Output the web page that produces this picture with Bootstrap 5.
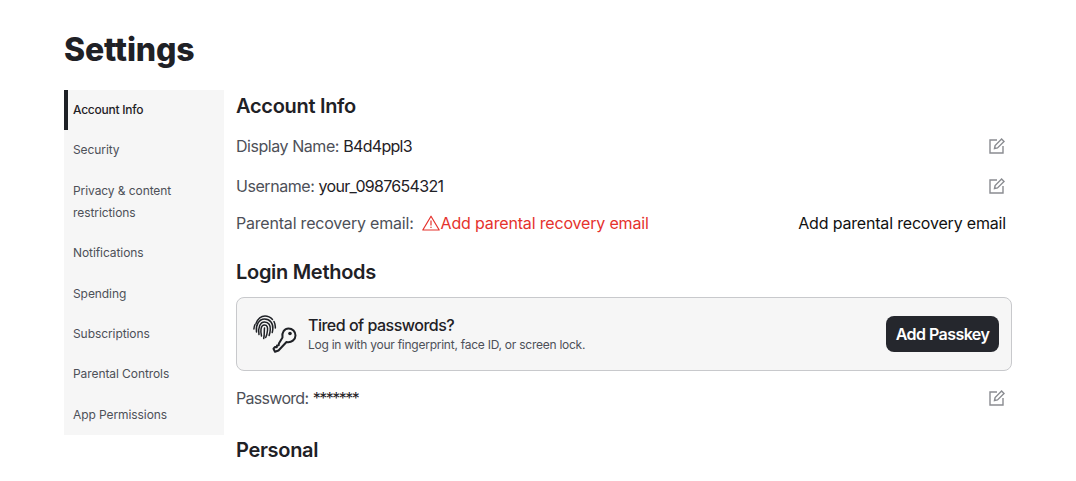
<!DOCTYPE html>
<html lang="en">

<head>
    <meta charset="UTF-8">
    <meta name="viewport" content="width=device-width, initial-scale=1.0">
    <title>Settings</title>
    <link href="https://cdn.jsdelivr.net/npm/bootstrap@5.3.0/dist/css/bootstrap.min.css" rel="stylesheet">
    <style>
        body { font-family: Inter, "Liberation Sans", sans-serif; color: #1f2126; background: #fff; overflow: hidden; }
        .page-wrap { width: 948px; margin-left: 64px; padding-top: 30px; }
        .page-title { font-size: 32px; line-height: 40px; font-weight: 800; margin: 0 0 20px; letter-spacing: -.15px; }
        .side-menu { width: 160px; background: #f6f6f6; flex: none; }
        .side-item { display: block; padding: 9px 8px 9.4px 9px; font-size: 12px; line-height: 22px; color: #4d5058; text-decoration: none; letter-spacing: -.08px; }
        .side-item.current { color: #1f2126; font-weight: 500; letter-spacing: -.25px; box-shadow: inset 4px 0 0 #1f2126; }
        .main-col { flex: 1; min-width: 0; margin-left: 4px; }
        .sect-title { font-size: 20px; line-height: 28px; font-weight: 600; margin: 0; letter-spacing: -.3px; }
        .first-title { margin-top: 2px; }
        .login-title { margin-top: 23px; }
        .personal-title { margin-top: 26px; }
        .info-row { font-size: 16px; line-height: 24px; color: #1f2126; letter-spacing: -.2px; }
        .info-label { color: #4d5058; }
        .short-label { letter-spacing: -.45px; }
        .pass-label { letter-spacing: -.7px; }
        .info-val { letter-spacing: -.7px; }
        .stars { letter-spacing: -1.5px; }
        .row-a { margin-top: 14px; }
        .row-b { margin-top: 16px; }
        .row-c { margin-top: 13px; }
        .row-d { margin-top: 15px; }
        .edit-icon { width: 18px; height: 18px; color: #8a8c91; margin-right: 6px; }
        .warn-text { color: #e5322d; letter-spacing: -.17px; }
        .warn-icon { margin-right: 1px; }
        .add-link { color: #111; margin-right: 6px; letter-spacing: -.18px; }
        .passkey-box { background: #f6f6f6; border: 1px solid #c8c9cc; border-radius: 8px; height: 74px; padding: 0 12px 0 16px; margin-top: 11px; }
        .passkey-title { font-size: 16px; line-height: 20px; font-weight: 500; letter-spacing: -.5px; margin-bottom: 2px; }
        .passkey-sub { font-size: 12px; line-height: 16px; color: #4d5058; letter-spacing: -.25px; }
        .passkey-art { flex: none; margin-right: 11px; }
        .passkey-btn { background: #25272d; color: #fff; font-size: 16px; font-weight: 600; letter-spacing: -.55px; border-radius: 8px; border: 0; height: 36px; width: 113px; padding: 0; }
    </style>
</head>

<body>
    <div class="page-wrap">
        <h1 class="page-title">Settings</h1>
        <div class="d-flex gap-2 align-items-start">
            <nav class="side-menu">
                <a class="side-item current" href="#">Account Info</a>
                <a class="side-item" href="#">Security</a>
                <a class="side-item" href="#">Privacy &amp; content restrictions</a>
                <a class="side-item" href="#">Notifications</a>
                <a class="side-item" href="#">Spending</a>
                <a class="side-item" href="#">Subscriptions</a>
                <a class="side-item" href="#">Parental Controls</a>
                <a class="side-item" href="#">App Permissions</a>
            </nav>
            <div class="main-col">
                <h2 class="sect-title first-title">Account Info</h2>
                <div class="info-row row-a d-flex justify-content-between align-items-center">
                    <div><span class="info-label short-label">Display Name:</span> <span class="info-val">B4d4ppl3</span></div>
                    <svg class="edit-icon" viewBox="0 0 18 18" fill="none" stroke="currentColor" stroke-width="1.4"><path d="M9 3H2v13h13V9"/><path d="M6.5 11.5l.6-3L13.6 2l2.4 2.4-6.5 6.5z"/></svg>
                </div>
                <div class="info-row row-b d-flex justify-content-between align-items-center">
                    <div><span class="info-label short-label">Username:</span> <span class="info-val">your_0987654321</span></div>
                    <svg class="edit-icon" viewBox="0 0 18 18" fill="none" stroke="currentColor" stroke-width="1.4"><path d="M9 3H2v13h13V9"/><path d="M6.5 11.5l.6-3L13.6 2l2.4 2.4-6.5 6.5z"/></svg>
                </div>
                <div class="info-row row-c d-flex justify-content-between align-items-center">
                    <div class="d-flex align-items-center">
                        <span class="info-label me-2">Parental recovery email:</span>
                        <svg class="warn-icon" width="18" height="16" viewBox="0 0 18 16" fill="none" stroke="#e5322d" stroke-width="1.2"><path d="M9 1.200L.8 15h16.400z" stroke-linejoin="round"/><path d="M9 5.500v5M9 11.700v1.300"/></svg>
                        <span class="warn-text">Add parental recovery email</span>
                    </div>
                    <span class="add-link">Add parental recovery email</span>
                </div>
                <h2 class="sect-title login-title">Login Methods</h2>
                <div class="passkey-box d-flex align-items-center justify-content-between">
                    <div class="d-flex align-items-center">
                        <svg class="passkey-art" width="44" height="38" viewBox="0 0 44 38" fill="none" stroke="#1f2126">
                            <g stroke-width="1.500" stroke-linecap="round">
                                <path d="M3 8.500C5 3.500 8 1 12 1c3 0 5.500 1.300 7.500 3.500"/>
                                <path d="M.9 14C1 12 1.500 10.500 2 9.500M21 6.500c1 2 1.500 4 1.300 6.500"/>
                                <path d="M3.500 17C2.500 10 6 4 11.500 4s9 4.500 8.300 10c-.1 1.500-.3 2.500-.6 3.500"/>
                                <path d="M6 19.500C4.800 13 7 7 11.500 7s6 3.500 5.800 7.500c-.1 2-.5 4-1.200 6"/>
                                <path d="M8.500 21c-1-4-1.300-11 3-11 3 0 3.300 3 3 5.500-.2 2-.7 5-1.800 7"/>
                                <path d="M11.500 13c-.5 3 .2 6-.8 10.500"/>
                            </g>
                            <path d="M29.500 22.500c-1-5 2-9 6-9s7 3 7 7-4 7.500-9 6.500L25.500 35.500l-3.500 1.200-1.500-3 1.500-1.700 1.800.2.200-1.700 1.700-.2.200-1.800z" stroke-width="2" stroke-linejoin="round"/>
                            <circle cx="37" cy="18.500" r="1.800" fill="#1f2126" stroke="none"/>
                        </svg>
                        <div>
                            <div class="passkey-title">Tired of passwords?</div>
                            <div class="passkey-sub">Log in with your fingerprint, face ID, or screen lock.</div>
                        </div>
                    </div>
                    <button class="passkey-btn" type="button">Add Passkey</button>
                </div>
                <div class="info-row row-d d-flex justify-content-between align-items-center">
                    <div><span class="info-label pass-label">Password:</span> <span class="info-val stars">*******</span></div>
                    <svg class="edit-icon" viewBox="0 0 18 18" fill="none" stroke="currentColor" stroke-width="1.4"><path d="M9 3H2v13h13V9"/><path d="M6.5 11.5l.6-3L13.6 2l2.4 2.4-6.5 6.5z"/></svg>
                </div>
                <h2 class="sect-title personal-title">Personal</h2>
            </div>
        </div>
    </div>
    <script src="https://cdn.jsdelivr.net/npm/bootstrap@5.3.0/dist/js/bootstrap.bundle.min.js"></script>
</body>

</html>
